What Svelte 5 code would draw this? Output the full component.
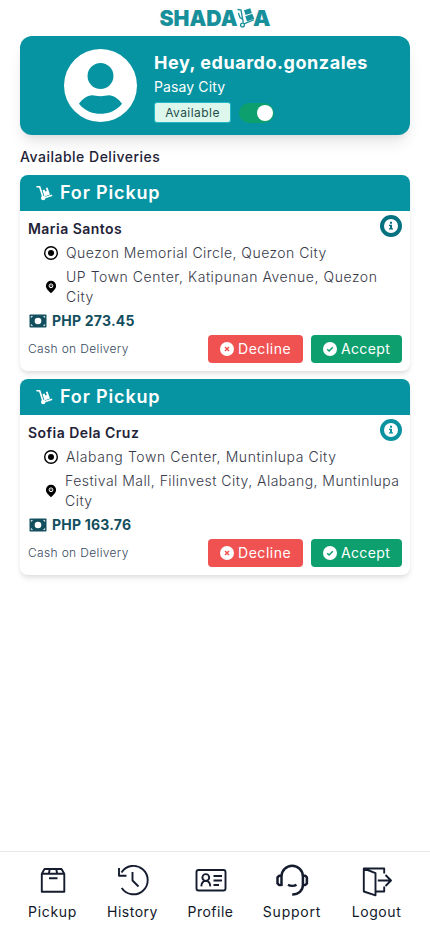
<script>
  const deliveries = [
    { name: 'Maria Santos', from: 'Quezon Memorial Circle, Quezon City', to: ['UP Town Center, Katipunan Avenue, Quezon', 'City'], price: 'PHP 273.45', dark: true },
    { name: 'Sofia Dela Cruz', from: 'Alabang Town Center, Muntinlupa City', to: ['Festival Mall, Filinvest City, Alabang, Muntinlupa', 'City'], price: 'PHP 163.76', dark: false }
  ];
</script>

<div class="page">
  <header>
    <svg width="112" height="24" viewBox="0 0 112 24" role="img" aria-label="Shadala">
      <g font-family="Inter, sans-serif" font-weight="900" font-size="21.5" fill="#17909b">
        <text x="0.500" y="20.500" textLength="78" lengthAdjust="spacingAndGlyphs">SHADA</text>
        <text x="94" y="20.500" textLength="17.500" lengthAdjust="spacingAndGlyphs">A</text>
      </g>
      <g stroke="#17909b" fill="none" stroke-width="1.3" stroke-linecap="round">
        <path d="M79 4.500l3 .6 2.200 12M85 18.800l9.500-3.800M79.500 8.500l1.500 4 3 2" />
        <circle cx="83.500" cy="20" r="1.900" fill="#fff" />
      </g>
      <g fill="#17909b"><path d="M85 5.200l6.200-2 1.700 4.800-6.300 2z M86.300 11.200l7-2.400 2 5-7.300 2.700z" /></g>
    </svg>
  </header>

  <section class="profile">
    <svg class="avatar" viewBox="2 2 20 20" fill="#fff" fill-rule="evenodd">
      <path d="M12 2a10 10 0 1 0 0 20 10 10 0 0 0 0-20zM12 5.850a3.550 3.550 0 1 1 0 7.100 3.550 3.550 0 0 1 0-7.100zM6.100 17c1-1.300 2.200-2.300 3.600-2.300.7 0 1.300.25 2.300.25s1.600-.25 2.300-.25c1.400 0 2.600 1 3.600 2.300-1.700 2.100-3.900 2.750-5.900 2.750S7.800 19.100 6.100 17z" />
    </svg>
    <div class="who">
      <h1>Hey, eduardo.gonzales</h1>
      <p>Pasay City</p>
      <div class="status"><span class="badge">Available</span><span class="toggle"><i></i></span></div>
    </div>
  </section>

  <h2>Available Deliveries</h2>

  {#each deliveries as d}
    <article>
      <div class="head">
        <svg width="17" height="16" viewBox="0 0 17 16">
          <path d="M1 1.800h2.700l3 9.500" fill="none" stroke="#fff" stroke-width="1.600" stroke-linecap="round" stroke-linejoin="round" />
          <path d="M8.500 12.800l7-2.400" stroke="#fff" stroke-width="1.600" stroke-linecap="round" />
          <circle cx="7.200" cy="13" r="2.200" fill="#fff" />
          <path d="M6.500 5.200l2-.7.7 2 1.600-.5-1-3 1.700-.6 2.500 7.100-5.500 1.900z" fill="#fff" />
        </svg>
        <span>For Pickup</span>
      </div>
      <div class="body">
        <div class="top">
          <strong class="name">{d.name}</strong>
          <span class="info" class:dark={d.dark}>
            <svg width="8" height="10" viewBox="0 0 8 10" fill="currentColor"><path d="M3 .8h2v1.900H3zM2 3.700h3v3.600h1v1.300H2V7.300h1V5H2z" /></svg>
          </span>
        </div>
        <div class="place">
          <svg width="16" height="16" viewBox="0 0 16 16"><circle cx="8" cy="8" r="6.300" fill="none" stroke="#000" stroke-width="1.400" /><circle cx="8" cy="8" r="3" /></svg>
          <span class:f1={d.dark} class:f2={!d.dark}>{d.from}</span>
        </div>
        <div class="place">
          <svg width="16" height="16" viewBox="0 0 16 16"><path d="M8 14.200C6 12 2.900 9.700 2.900 6.900a5.100 5.100 0 0 1 10.200 0c0 2.800-3.100 5.100-5.100 7.300z" /><circle cx="8" cy="6.800" r="1.900" fill="none" stroke="#fff" stroke-width="1" /><circle cx="8" cy="6.800" r=".6" fill="#fff" /></svg>
          <span class:t1={d.dark} class:t2={!d.dark}>{d.to[0]}<br />{d.to[1]}</span>
        </div>
        <div class="price">
          <svg width="18" height="14" viewBox="0 0 18 14"><rect x=".5" y=".5" width="17" height="13" rx=".8" fill="#134e5e" /><circle cx="9" cy="7" r="3.300" fill="#fff" /><path d="M2.300 3.700V2.400h1.300M14.400 2.400h1.300v1.300M15.700 10.300v1.300h-1.300M3.600 11.600H2.300v-1.300" fill="none" stroke="#fff" stroke-width=".9" /></svg>
          <b>{d.price}</b>
        </div>
        <div class="foot">
          <span class="cod">Cash on Delivery</span>
          <button class="decline"><svg width="14" height="14" viewBox="0 0 14 14"><circle cx="7" cy="7" r="7" fill="#fff" /><path d="M5 5l4 4M9 5L5 9" stroke="#f05252" stroke-width="1.500" /></svg><span>Decline</span></button>
          <button class="accept"><svg width="14" height="14" viewBox="0 0 14 14"><circle cx="7" cy="7" r="7" fill="#fff" /><path d="M4.200 7.200l1.900 1.800 3.700-3.700" fill="none" stroke="#0e9f6e" stroke-width="1.500" /></svg><span>Accept</span></button>
        </div>
      </div>
    </article>
  {/each}

  <nav>
    <a class="n1"><svg viewBox="0 0 36 36"><path d="M6.800 11.700h22.500v18H6.800zM6.800 11.700L9.500 7h17l2.800 4.700M14.800 7l-1 4.700M21.200 7l1 4.700M14 16.200h8.500" /></svg><span>Pickup</span></a>
    <a class="n2"><svg viewBox="0 0 36 36"><path d="M6.500 10.500A14.200 14.200 0 1 1 6.700 26M4 6v7.700h7.500M17.500 10v8.500l6 6" /></svg><span>History</span></a>
    <a class="n3"><svg viewBox="0 0 36 36"><rect x="3.500" y="8" width="29" height="20.500" rx="2" /><circle cx="12.800" cy="15.500" r="3.400" /><path d="M8.300 24.300c.3-3.400 1.900-5.400 4.500-5.400s4.200 2 4.500 5.400M20.500 14h8.500M20.500 18.500h8.500M20.500 23h5.500" /></svg><span>Profile</span></a>
    <a class="n4"><svg viewBox="0 0 36 36"><g stroke-width="2.500"><path d="M7.500 24V14.500a10.700 10.700 0 0 1 21.400 0v8.500c0 5.500-4.400 9.500-10.700 9.500M14 22.700c2.300 1.400 6.200 1.400 8.500 0M7.500 13.800H5l-1.500 1.600v6L5 23h2.500M28.900 13.800h2.500l1.500 1.600v6L31.400 23h-2.500" /></g></svg><span>Support</span></a>
    <a class="n5"><svg viewBox="0 0 36 36"><path d="M25.200 11.500V6.500H4.800v23l11.700 3.800V11.200L4.800 6.500M16.500 29.500h8.700V24.500M18.800 18.500h13M26.500 13l5.500 5.500-5.500 5.500" /></svg><span>Logout</span></a>
  </nav>
</div>

<style>
  :global(body) { background: #fff; }
  * { box-sizing: border-box; margin: 0; }
  .page { height: 932px; display: flex; flex-direction: column; font-family: Inter, sans-serif; font-size: 14px; line-height: 20px; color: #1f2337; background: #fff; white-space: nowrap; }
  header { height: 36px; padding-top: 5px; display: flex; justify-content: center; flex: none; }
  .profile { margin: 0 20px; height: 99px; flex: none; padding: 13px 44px; border-radius: 12px; background: #0694a2; color: #fff; display: flex; gap: 17px; box-shadow: 0 10px 15px -3px #0000001a, 0 4px 6px -2px #0000000d; }
  .avatar { width: 73px; height: 73px; flex: none; }
  h1 { font-size: 18px; font-weight: 700; line-height: 28px; letter-spacing: .53px; }
  .profile p { line-height: 20px; letter-spacing: .12px; }
  .status { display: flex; gap: 8px; margin-top: 5px; align-items: center; }
  .badge { width: 77px; height: 21px; line-height: 19px; text-align: center; border: 1px solid #22b8c6; border-radius: 3px; background: #def7ec; color: #1e4e4a; font-size: 12px; letter-spacing: .45px; }
  .toggle { width: 35px; height: 20px; border-radius: 10px; background: #0e9f6e; padding: 2px 1px; display: flex; justify-content: flex-end; }
  .toggle i { width: 16px; height: 16px; border-radius: 50%; background: #fff; }
  h2 { margin: 12px 20px 8px; font-size: 14px; font-weight: 500; line-height: 20px; flex: none; letter-spacing: .5px; }
  article { margin: 0 20px 8px; height: 196px; flex: none; border-radius: 8px; box-shadow: 0 4px 6px -1px #0000001a, 0 2px 4px -1px #0000000f; background: #fff; }
  .head { height: 36px; border-radius: 8px 8px 0 0; background: #0694a2; color: #fff; display: flex; align-items: center; gap: 7px; padding-left: 16px; font-size: 18px; font-weight: 600; letter-spacing: .85px; }
  .body { padding: 8px; display: flex; flex-direction: column; gap: 4px; }
  .top { height: 20px; display: flex; justify-content: space-between; }
  .name { font-weight: 600; letter-spacing: .46px; }
  .info { width: 22px; height: 22px; margin-top: -4px; border: 4px solid currentColor; border-radius: 50%; color: #0b92a0; display: flex; align-items: center; justify-content: center; }
  .info.dark { color: #06727f; }
  .place { display: flex; align-items: center; gap: 7px; padding-left: 15px; font-weight: 300; color: #373a49; }
  .f1 { letter-spacing: .45px; }
  .f2 { letter-spacing: .58px; }
  .t1 { letter-spacing: .55px; }
  .t2 { letter-spacing: .46px; margin-left: -1px; }
  .price { display: flex; align-items: center; gap: 5px; padding-left: 1px; color: #134e5e; letter-spacing: .22px; }
  .foot { display: flex; align-items: center; gap: 8px; height: 28px; }
  .cod { flex: 1; font-size: 12px; font-weight: 300; color: #374b5e; letter-spacing: .34px; }
  button { height: 28px; border: 0; border-radius: 4px; color: #fff; font: 400 14px/20px Inter, sans-serif; padding: 0 0 0 12px; display: flex; align-items: center; gap: 4px; }
  .decline { width: 95px; background: #f05252; letter-spacing: .55px; }
  .accept { width: 91px; background: #0e9f6e; letter-spacing: .35px; }
  nav { margin-top: auto; height: 81px; border-top: 1px solid #e5e7eb; padding: 10px 28px 0; display: flex; justify-content: space-between; flex: none; color: #111827; }
  nav a { display: flex; flex-direction: column; align-items: center; gap: 4px; letter-spacing: .5px; }
  nav svg { width: 36px; height: 36px; fill: none; stroke: #141c2e; stroke-width: 1.900; stroke-linejoin: round; }
  .n1 { width: 49px; letter-spacing: .65px; }
  .n2 { width: 51px; }
  .n3 { width: 45px; }
  .n4 { width: 58px; letter-spacing: .8px; }
  .n5 { width: 51px; letter-spacing: .6px; }
</style>
